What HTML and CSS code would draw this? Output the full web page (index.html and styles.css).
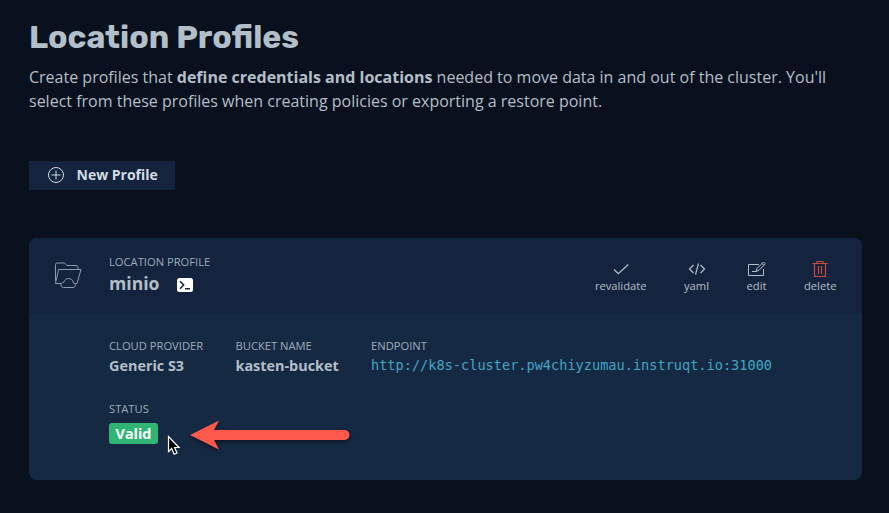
FILE: index.html
```html
<!DOCTYPE html>
<html lang="en">
<head>
<meta charset="utf-8">
<title>Location Profiles</title>
<link rel="stylesheet" href="styles.css">
</head>
<body>
<main class="page">
  <h1 class="title">Location Profiles</h1>
  <p class="intro">Create profiles that <b>define credentials and locations</b> needed to move data in and out of the cluster. You'll<br>select from these profiles when creating policies or exporting a restore point.</p>
  <button class="new-profile">
    <svg width="16" height="16" viewBox="0 0 16 16"><circle cx="8" cy="8" r="7.5"/><path d="M8 3.5v9M3.5 8h9"/></svg>
    <span>New Profile</span>
  </button>
  <section class="card">
    <header class="card-head">
      <svg class="folder" width="28" height="27" viewBox="0 0 28 27"><path d="M1.500 19V2.500Q1.500 1 3 1h7.500L13 3.500h9q2 0 2 2V7M7.500 21.500h-6L4.500 7.500H27L23 21.500h-2.500M9.500 25.500h9.500c3 0 3-3.500.500-4.500-.500-3-2.500-4.500-5-4.500s-3.800 1.500-4.500 3.500c-4 .500-4 5.500-.500 5.500z"/></svg>
      <div class="identity">
        <div class="label">LOCATION PROFILE</div>
        <div class="name-row">
          <span class="name">minio</span>
          <svg width="16" height="14" viewBox="0 0 16 14"><rect width="16" height="14" rx="2.500" fill="#fff"/><path d="M3 3.300L6.700 7 3 10.700M8 10.800h5" fill="none" stroke="#14233e" stroke-width="1.500"/></svg>
        </div>
      </div>
      <nav class="actions">
        <a class="action revalidate"><svg width="18" height="18" viewBox="0 0 18 18"><path d="M2 9.500l4.300 4.200L16.300 4.500" stroke-width="1.300"/></svg>revalidate</a>
        <a class="action yaml"><svg width="18" height="18" viewBox="0 0 18 18"><path d="M5.500 5L1.500 9l4 4M12.500 5l4 4-4 4M10.500 3.500l-3 11" stroke-width="1.200"/></svg>yaml</a>
        <a class="action edit"><svg width="18" height="18" viewBox="0 0 18 18"><path d="M11 4.500H.500v11h15V9M4 11.500h4M8 11.500l1-3L15.500 2l1.800 1.800L11 10.300zM14 3.500l1.800 1.800"/></svg>edit</a>
        <a class="action delete"><svg width="18" height="18" viewBox="0 0 18 18"><path d="M1.500 3.500h15M6 3.500v-2h6v2M3.500 3.500v13h11v-13M7.500 6v8M10.500 6v8" stroke-width="1.200"/></svg>delete</a>
      </nav>
    </header>
    <div class="card-body">
      <dl class="field provider"><dt class="label">CLOUD PROVIDER</dt><dd>Generic S3</dd></dl>
      <dl class="field bucket"><dt class="label">BUCKET NAME</dt><dd>kasten-bucket</dd></dl>
      <dl class="field endpoint"><dt class="label">ENDPOINT</dt><dd>http://k8s-cluster.pw4chiyzumau.instruqt.io:31000</dd></dl>
      <dl class="field status"><dt class="label">STATUS</dt><dd><span class="badge">Valid</span></dd></dl>
    </div>
  </section>
</main>
<svg class="arrow" width="170" height="44" viewBox="0 0 170 44"><path d="M5 20L34 5.500 29 15H159.500a5 5 0 0 1 0 10H29l5 9.500z" fill="#ff594c"/></svg>
<svg class="cursor" width="14" height="22" viewBox="0 0 14 22"><path d="M1.500 1.500v15l3.200-3 2.400 5.700 2.900-1.200-2.400-5.500h4.400z" fill="#000" stroke="#fff" stroke-width="1.200"/></svg>
</body>
</html>
```
FILE: styles.css
```css
* { box-sizing: border-box; }
body {
  margin: 0;
  height: 513px;
  overflow: hidden;
  background: #0a111e;
  color: #b3bfc8;
  font-family: "Open Sans", sans-serif;
}
.page { padding: 17px 27px 0 29px; }
.title {
  margin: 0;
  font: 700 32px/40px Rubik, Inter, sans-serif;
  white-space: nowrap;
}
.intro {
  margin: 8px 0 0;
  font-size: 16px;
  line-height: 24px;
  white-space: nowrap;
}
.new-profile {
  display: flex;
  align-items: center;
  gap: 13px;
  width: 146px;
  height: 29px;
  margin-top: 48px;
  padding: 0 0 1px 19px;
  border: 0;
  background: #14233e;
  color: #d5dde3;
  font: 700 14px/20px "Open Sans", sans-serif;
  white-space: nowrap;
}
.new-profile span { margin-left: -0.5px; }
svg { display: block; flex: none; }
.new-profile svg, .folder, .action svg { fill: none; stroke: currentColor; }
.card {
  width: 833px;
  height: 242px;
  margin-top: 48px;
  border-radius: 8px;
  overflow: hidden;
  background: #162943;
}
.card-head {
  display: flex;
  height: 76px;
  background: #14233e;
}
.folder { margin: 24px 0 0 25px; color: #8d9baa; }
.identity { margin: 16px 0 0 27px; }
.label {
  font-size: 11.2px;
  line-height: 16px;
  color: #9facba;
  white-space: nowrap;
}
.name-row { display: flex; align-items: center; gap: 18px; }
.name {
  font-size: 17.6px;
  line-height: 28px;
  font-weight: 700;
  margin-top: -1px;
}
.name-row svg { margin-top: 2px; }
.actions {
  display: flex;
  gap: 37.5px;
  margin: 22px 25.500px 0 auto;
}
.action {
  display: flex;
  flex-direction: column;
  align-items: center;
  font-size: 11.2px;
  line-height: 16px;
}
.delete svg { color: #c84a3c; }
.card-body {
  display: grid;
  grid-template-columns: 126.5px 135.5px auto;
  grid-template-rows: 63px auto;
  padding: 24px 0 0 80px;
}
.field { margin: 0; }
.field dd {
  margin: 0;
  font-size: 14.4px;
  line-height: 23px;
  font-weight: 700;
  white-space: nowrap;
}
.field.endpoint dd {
  color: #42a5c4;
  font: 400 13.6px/23px "DejaVu Sans Mono", monospace;
}
.badge {
  display: block;
  width: 49px;
  height: 21px;
  margin-top: 6px;
  border-radius: 3px;
  background: #30b573;
  color: #fff;
  line-height: 21px;
  text-align: center;
}
.arrow {
  position: absolute;
  left: 185px;
  top: 415px;
  filter: drop-shadow(0 2px 2px rgba(0, 0, 0, .5));
}
.cursor { position: absolute; left: 167px; top: 435px; }
```
